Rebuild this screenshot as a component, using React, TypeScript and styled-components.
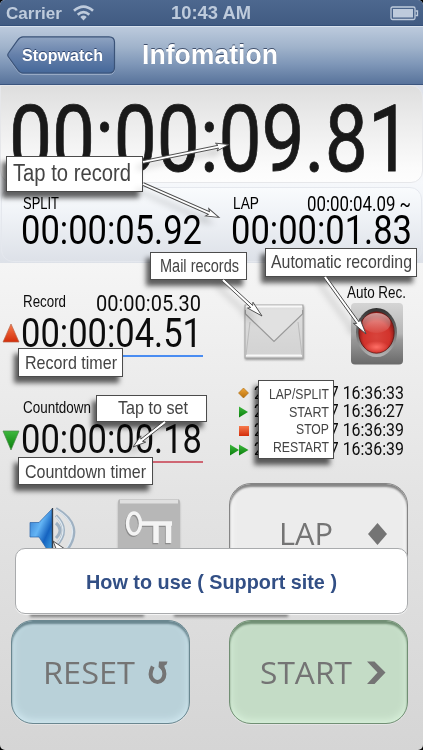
import React, { useLayoutEffect, useRef, useState } from "react";
import styled, { createGlobalStyle } from "styled-components";

const GlobalStyle = createGlobalStyle`
  * { box-sizing: border-box; }
  body { margin: 0; background: #000; font-family: "Liberation Sans", Arial, sans-serif; }
`;

/* ---------- text squeezed to a given width ---------- */

const FitBox = styled.div<{ $w: number; $size: number }>`
  width: ${(p) => p.$w}px;
  height: ${(p) => p.$size}px;
  font-size: ${(p) => p.$size}px;
  line-height: 1;
  flex: none;
`;
const FitInner = styled.span`
  display: inline-block;
  vertical-align: top;
  white-space: nowrap;
  transform-origin: 0 0;
`;

type FitProps = { w: number; size: number; children: string; className?: string };

function FitText({ w, size, children, className }: FitProps) {
  const ref = useRef<HTMLSpanElement>(null);
  const [k, setK] = useState(1);
  useLayoutEffect(() => {
    const natural = ref.current ? ref.current.getBoundingClientRect().width / k : 0;
    if (natural) setK(w / natural);
  }, [w, size, children]);
  return (
    <FitBox $w={w} $size={size} className={className}>
      <FitInner ref={ref} style={{ transform: `scaleX(${k})` }}>
        {children}
      </FitInner>
    </FitBox>
  );
}

const Digits = styled(FitText)`
  font-family: Roboto, "Liberation Sans", sans-serif;
`;
const MainDigits = styled(Digits)`
  -webkit-text-stroke: 0.8px #191919;
`;

/* ---------- frame ---------- */

const Screen = styled.main`
  position: relative;
  width: 423px;
  height: 750px;
  overflow: hidden;
  border-radius: 5px;
  display: flex;
  flex-direction: column;
  color: #0c0c0c;
  background: linear-gradient(#f5f5f5 263px, #efefef 340px, #e4e4e4 490px, #d5d5d5 750px);
`;

const StatusBar = styled.header`
  height: 26px;
  flex: none;
  display: grid;
  grid-template-columns: 67px 98px 1fr auto;
  align-items: start;
  padding: 5px 4px 0 6px;
  color: #becbdc;
  font-weight: bold;
  background: linear-gradient(#4d688f, #415b82);
  border-bottom: 1px solid #34507a;
`;
const WifiIcon = styled.svg`
  width: 21px;
  height: 16px;
`;
const BatteryIcon = styled.svg`
  width: 29px;
  height: 15px;
  margin-top: 1px;
`;

const NavBar = styled.nav`
  height: 59px;
  flex: none;
  display: flex;
  padding-left: 7px;
  background: linear-gradient(#bccadd, #a0b3cb 35%, #7f97b8 65%, #58739b);
  border-top: 1px solid #d8e2ee;
  border-bottom: 1px solid #3b557e;
`;
const BackButton = styled.button`
  position: relative;
  width: 109px;
  height: 40px;
  margin-top: 9px;
  padding: 0 0 1px 15px;
  border: 0;
  background: none;
  color: #fff;
  display: flex;
  align-items: center;
  font: bold 16px "Liberation Sans", Arial, sans-serif;
  text-shadow: 0 -1px 0 rgba(20, 40, 80, 0.7);
`;
const BackShape = styled.svg`
  position: absolute;
  inset: 0;
`;
const BackLabel = styled(FitText)`
  position: relative;
`;
const Title = styled(FitText)`
  margin: 15px 0 0 26px;
  color: #fff;
  font-weight: bold;
  text-shadow: 0 -1px 0 rgba(40, 55, 85, 0.8);
`;

/* ---------- timers ---------- */

const Display = styled.section`
  height: 98px;
  flex: none;
  padding: 7px 0 0 8px;
  color: #191919;
  border: 1px solid #e6e7ea;
  border-radius: 0 12px 12px 12px;
  background: linear-gradient(#dedede, #ebebeb 35%, #fbfbfb 85%, #fdfdfd);
`;
const DisplayBack = styled.div`
  height: 178px;
  flex: none;
  background: linear-gradient(#dde1ea, #f6f8fb 98px, #f2f5f9 115px, #dde1e8);
`;
const SplitPanel = styled.section`
  height: 75px;
  margin: 4px 1px 0;
  padding: 7px 0 0 19px;
  display: grid;
  grid-template-columns: 210px 182px;
  color: #000;
  border: 1px solid #e5e8ee;
  border-radius: 12px;
  background: linear-gradient(#f9fbfd, #f0f3f7 35%, #dde1e8);
`;
const Head = styled.div<{ $h: number }>`
  height: ${(p) => p.$h}px;
  display: flex;
  justify-content: space-between;
  padding: 0 2px;
`;
const SideTime = styled(Digits)`
  margin-top: -1px;
`;
const Row = styled.section`
  height: 106px;
  flex: none;
  display: grid;
  grid-template-columns: 21px 182px 1fr;
  padding-top: 29px;
`;
const Marker = styled.svg`
  width: 18px;
  height: 22px;
  margin: 31px 0 0 2px;
`;
const TimerBody = styled.div<{ $line: string }>`
  height: 65px;
  border-bottom: 2px solid ${(p) => p.$line};
`;
const TimerLabel = styled(FitText)`
  margin-top: 1px;
`;

const Devices = styled.div`
  display: flex;
  align-items: flex-start;
  padding-left: 38px;
`;
const MailIcon = styled.svg`
  width: 66px;
  height: 62px;
  margin-top: 10px;
`;
const AutoRec = styled.div`
  display: flex;
  flex-direction: column;
  margin: -7px 0 0 40px;
`;
const RecButton = styled.svg`
  width: 54px;
  height: 64px;
  margin: 1px 0 0 3px;
`;
const Log = styled.ul`
  list-style: none;
  margin: -14px 0 0;
  padding: 0;
`;
const LogLine = styled.li`
  height: 18.8px;
  display: grid;
  grid-template-columns: 51px 150px;
  align-items: center;
`;
const LogMark = styled.svg`
  width: 24px;
  height: 16px;
  margin-left: 24px;
`;

/* ---------- lower controls ---------- */

const Controls = styled.section`
  height: 137px;
  flex: none;
  display: flex;
  align-items: flex-start;
  padding: 8px 0 0 28px;
`;
const SpeakerIcon = styled.svg`
  width: 52px;
  height: 52px;
  margin-top: 22px;
`;
const KeyIcon = styled.svg`
  width: 68px;
  height: 60px;
  margin: 14px 0 0 35px;
`;
const Actions = styled.section`
  display: flex;
  gap: 39px;
  padding: 8px 0 0 11px;
`;
const PadButton = styled.button<{ $bg: string; $edge: string; $glow: string }>`
  width: 179px;
  height: 104px;
  flex: none;
  display: flex;
  align-items: flex-start;
  justify-content: space-between;
  padding: 36px 20px 0 29px;
  border: 1px solid ${(p) => p.$edge};
  border-radius: 22px;
  background: ${(p) => p.$bg};
  box-shadow: inset 0 3px 2px ${(p) => p.$edge}, inset 0 -2px 8px ${(p) => p.$glow},
    0 1px 0 rgba(255, 255, 255, 0.35);
  color: #747474;
  font-family: "Open Sans", "Noto Sans", sans-serif;
`;
const LapButton = styled(PadButton)`
  margin-left: 46px;
  height: 120px;
  padding: 34px 19px 0 49px;
`;
const PadIcon = styled.svg`
  width: 22px;
  height: 26px;
  margin-top: 3px;
`;

/* ---------- overlays ---------- */

const SupportButton = styled.button`
  position: absolute;
  left: 15px;
  top: 548px;
  width: 393px;
  height: 66px;
  padding: 2px 0 0 70px;
  display: flex;
  align-items: center;
  border: 1px solid #a9abad;
  border-radius: 10px;
  background: #fff;
  color: #324f85;
  font: bold 20px "Liberation Sans", Arial, sans-serif;
  box-shadow: 0 1px 0 rgba(255, 255, 255, 0.7);
`;
const LowerShadow = styled.i<{ $x: number }>`
  position: absolute;
  left: ${(p) => p.$x}px;
  top: 600px;
  width: 114px;
  height: 17px;
  background: rgba(0, 0, 0, 0.42);
  filter: blur(1.5px);
`;
const Callout = styled.aside<{ $x: number; $y: number; $w: number; $h: number; $px: number; $py: number }>`
  position: absolute;
  left: ${(p) => p.$x}px;
  top: ${(p) => p.$y}px;
  width: ${(p) => p.$w}px;
  height: ${(p) => p.$h}px;
  padding: ${(p) => p.$py}px ${(p) => p.$px}px 0;
  border: 1px solid #4c4c4c;
  background: #fff;
  color: #444;
  box-shadow: -4px 6px 5px rgba(0, 0, 0, 0.62);
`;
const Legend = styled(Callout)`
  display: flex;
  flex-direction: column;
  align-items: flex-end;
  gap: 2.6px;
`;
const Arrows = styled.svg`
  position: absolute;
  inset: 0;
  pointer-events: none;
  filter: drop-shadow(-6px 6px 3px rgba(0, 0, 0, 0.16));
`;

function Arrow({ from, to, size = 12 }: { from: number[]; to: number[]; size?: number }) {
  const dx = to[0] - from[0];
  const dy = to[1] - from[1];
  const len = Math.hypot(dx, dy);
  const angle = (Math.atan2(dy, dx) * 180) / Math.PI;
  const neck = len - size;
  return (
    <path
      transform={`translate(${from[0]} ${from[1]}) rotate(${angle})`}
      d={`M0 -1.4H${neck + 1}L${neck - 1} -4L${len} 0L${neck - 1} 4L${neck + 1} 1.4H0`}
      fill="#fff"
      stroke="#4a4a4a"
      strokeWidth="0.9"
    />
  );
}

type TimerProps = {
  label: string;
  labelW: number;
  value: string;
  line: string;
  side?: string;
  marker: React.ReactNode;
};

function Timer({ label, labelW, value, line, side, marker }: TimerProps) {
  return (
    <>
      <Marker viewBox="0 0 18 22">{marker}</Marker>
      <TimerBody $line={line}>
        <Head $h={21}>
          <TimerLabel w={labelW} size={16.5}>{label}</TimerLabel>
          {side && <Digits w={105} size={22.5}>{side}</Digits>}
        </Head>
        <Digits w={181} size={40.5}>{value}</Digits>
      </TimerBody>
    </>
  );
}

const marks = [
  <path key="d" d="M16.500 3L21.500 8L16.500 13L11.500 8Z" fill="url(#amber)" stroke="#a86a10" strokeWidth=".6" />,
  <path key="p" d="M12 2.500L21 8L12 13.500Z" fill="url(#green)" />,
  <rect key="s" x="12" y="3" width="10" height="10" fill="url(#red)" />,
  <path key="r" d="M3 2.500L12 8V2.500L21.500 8L12 13.500V8L3 13.500Z" fill="url(#green)" />,
];
const times = ["16:36:33", "16:36:27", "16:36:39", "16:36:39"];

export default function App() {
  return (
    <>
      <GlobalStyle />
      <Screen>
        <StatusBar>
          <FitText w={56} size={17}>Carrier</FitText>
          <WifiIcon viewBox="0 0 21 16">
            <g fill="none" stroke="#becbdc" strokeWidth="2.700">
              <path d="M1 5.800Q10.500 -2.500 20 5.800" />
              <path d="M4.700 9.700Q10.500 4.600 16.300 9.700" />
            </g>
            <path d="M7.300 12Q10.500 9.200 13.700 12L10.500 15.400Z" fill="#becbdc" />
          </WifiIcon>
          <FitText w={80} size={17.5}>10:43 AM</FitText>
          <BatteryIcon viewBox="0 0 29 15">
            <rect x="1" y="1" width="24" height="12.500" rx="1.500" fill="none" stroke="#becbdc" strokeWidth="1.300" />
            <rect x="3" y="3" width="20" height="8.500" fill="#becbdc" />
            <path d="M25.500 5H27.500V9.500H25.500" fill="none" stroke="#becbdc" strokeWidth="1.300" />
          </BatteryIcon>
        </StatusBar>
        <NavBar>
          <BackButton>
            <BackShape width="109" height="40" viewBox="0 0 109 40">
              <defs>
                <linearGradient id="back" x2="0" y2="1">
                  <stop offset="0" stopColor="#8fa4c2" />
                  <stop offset=".5" stopColor="#6580aa" />
                  <stop offset="1" stopColor="#45689a" />
                </linearGradient>
              </defs>
              <path d="M16 1.500H102Q107.500 1.500 107.500 7V33Q107.500 38.500 102 38.500H16Q13 38.500 10.500 35L1.500 22Q0 20 1.500 18L10.500 5Q13 1.500 16 1.500Z" fill="none" stroke="#b5c3d8" strokeOpacity=".6" />
              <path d="M16 .8H102Q107.500 .8 107.500 6.300V31.500Q107.500 37 102 37H16Q13 37 10.500 33.500L1.500 21Q0 19 1.500 17L10.500 4.300Q13 .8 16 .8Z" fill="url(#back)" stroke="#3b5378" strokeWidth="1.200" />
            </BackShape>
            <BackLabel w={81} size={16}>Stopwatch</BackLabel>
          </BackButton>
          <Title w={136} size={27}>Infomation</Title>
        </NavBar>

        <DisplayBack>
          <Display>
            <MainDigits w={402} size={93}>00:00:09.81</MainDigits>
          </Display>
          <SplitPanel>
            <div>
              <Head $h={15}><FitText w={36} size={17}>SPLIT</FitText></Head>
              <Digits w={181} size={40.5}>00:00:05.92</Digits>
            </div>
            <div>
              <Head $h={15}>
                <FitText w={26} size={17}>LAP</FitText>
                <SideTime w={104} size={20}>00:00:04.09 ~</SideTime>
              </Head>
              <Digits w={181} size={40.5}>00:00:01.83</Digits>
            </div>
          </SplitPanel>
        </DisplayBack>

        <Row>
          <Timer
            label="Record"
            labelW={43}
            side="00:00:05.30"
            value="00:00:04.51"
            line="#4a8df2"
            marker={<path d="M9 1L17 19H1Z" fill="url(#red)" stroke="#b8664a" strokeWidth=".7" />}
          />
          <Devices>
            <MailIcon viewBox="0 0 66 62">
              <defs>
                <linearGradient id="mail" x2="0" y2="1">
                  <stop offset="0" stopColor="#dedede" />
                  <stop offset="1" stopColor="#d2d2d2" />
                </linearGradient>
                <filter id="soft"><feGaussianBlur stdDeviation="1.200" /></filter>
              </defs>
              <rect x="4" y="4" width="59" height="54" fill="#999" filter="url(#soft)" />
              <rect x="4" y="3" width="58" height="53" fill="url(#mail)" stroke="#a5a5a5" />
              <path d="M5 4.500H61M5 53.500H61" stroke="#f8f8f8" strokeWidth="2" />
              <path d="M9 20L5 53M57 20L61 53" stroke="#bbb" fill="none" />
              <path d="M4.500 8V12L33 39.500L61.500 12V8" fill="#e0e0e0" stroke="#999" strokeWidth="1.200" />
              <path d="M5 7.500H61V11L33 37.500L5 11Z" fill="#e1e1e1" />
            </MailIcon>
            <AutoRec>
              <FitText w={59} size={16}>Auto Rec.</FitText>
              <RecButton viewBox="0 0 54 64">
                <defs>
                  <linearGradient id="steel" x2="0" y2="1">
                    <stop offset="0" stopColor="#d5d5d5" />
                    <stop offset=".5" stopColor="#b5b5b5" />
                    <stop offset=".6" stopColor="#999" />
                    <stop offset="1" stopColor="#696969" />
                  </linearGradient>
                  <linearGradient id="ring" x2="0" y2="1">
                    <stop offset="0" stopColor="#303030" />
                    <stop offset="1" stopColor="#b5b5b5" />
                  </linearGradient>
                  <radialGradient id="lamp" cy=".6">
                    <stop offset="0" stopColor="#d8443c" />
                    <stop offset=".75" stopColor="#d2332c" />
                    <stop offset="1" stopColor="#9a1f1b" />
                  </radialGradient>
                  <linearGradient id="gloss" x2="0" y2="1">
                    <stop offset="0" stopColor="#fff" stopOpacity=".55" />
                    <stop offset="1" stopColor="#fff" stopOpacity=".05" />
                  </linearGradient>
                  <radialGradient id="glow">
                    <stop offset="0" stopColor="#ff6f66" />
                    <stop offset="1" stopColor="#ff6f66" stopOpacity="0" />
                  </radialGradient>
                </defs>
                <rect x="1" y="1" width="52" height="61.500" rx="4" fill="url(#steel)" />
                <ellipse cx="26.500" cy="30.500" rx="20.500" ry="24.500" fill="url(#ring)" />
                <ellipse cx="26.500" cy="30.500" rx="17.700" ry="20.700" fill="url(#lamp)" stroke="#5b1512" strokeWidth=".8" />
                <ellipse cx="26.500" cy="45" rx="12" ry="6" fill="url(#glow)" />
                <ellipse cx="26.500" cy="21" rx="14" ry="10" fill="url(#gloss)" />
              </RecButton>
            </AutoRec>
          </Devices>
        </Row>

        <Row>
          <Timer
            label="Countdown"
            labelW={68}
            value="00:00:00.18"
            line="#cf6673"
            marker={<path d="M1 2H17L9 21Z" fill="url(#green)" stroke="#4b8a4b" strokeWidth=".7" />}
          />
          <Log>
            {times.map((t, i) => (
              <LogLine key={i}>
                <LogMark viewBox="0 0 24 16">
                  <defs>
                    <linearGradient id="amber" x2="0" y2="1">
                      <stop offset="0" stopColor="#f0a63a" />
                      <stop offset="1" stopColor="#b8700c" />
                    </linearGradient>
                    <linearGradient id="green" x2="0" y2="1">
                      <stop offset="0" stopColor="#3eb83e" />
                      <stop offset="1" stopColor="#087e0a" />
                    </linearGradient>
                    <linearGradient id="red" x2="0" y2="1">
                      <stop offset="0" stopColor="#f77a4c" />
                      <stop offset="1" stopColor="#d32d0a" />
                    </linearGradient>
                  </defs>
                  {marks[i]}
                </LogMark>
                <Digits w={150} size={17.5}>{`2012/12/07 ${t}`}</Digits>
              </LogLine>
            ))}
          </Log>
        </Row>

        <Controls>
          <SpeakerIcon viewBox="0 0 52 52">
            <defs>
              <linearGradient id="blue" x2="1" y2="1">
                <stop offset="0" stopColor="#2f74c9" />
                <stop offset=".4" stopColor="#64b5f5" />
                <stop offset=".65" stopColor="#1563c0" />
                <stop offset="1" stopColor="#4cb6f0" />
              </linearGradient>
            </defs>
            <path d="M2 17.500H11L24 4V52L11 32H2Z" fill="url(#blue)" stroke="#2863a8" strokeWidth=".7" />
            <path d="M24.500 3V50" stroke="#333e4c" strokeWidth="1.300" />
            <g fill="none" stroke="#9fb1c2" strokeWidth="3">
              <path d="M28 18Q36 25 28 33" />
              <path d="M28 10.500Q43 25 28 41" />
              <path d="M28 3.500Q57 20 39 45" />
            </g>
            <g fill="none" stroke="#dfe9f1" strokeWidth="1.200">
              <path d="M28 11.500Q42 25 28 40" />
              <path d="M28 4.500Q55 20 38 44" />
            </g>
          </SpeakerIcon>
          <KeyIcon viewBox="0 0 68 60">
            <rect x="3" y="4" width="62" height="60" rx="3" fill="#8d8d8d" opacity=".6" filter="url(#soft)" />
            <rect x="3" y="2" width="62" height="62" rx="3" fill="#b7b7b7" />
            <path d="M5 4.500H63" stroke="#e0e0e0" strokeWidth="4" />
            <g transform="translate(-.8 1.200)" fill="none" stroke="#8c8c8c">
              <ellipse cx="19" cy="26.500" rx="6.500" ry="10.500" strokeWidth="3.500" />
              <path d="M26 26.500H57" strokeWidth="4.500" />
              <path d="M41 27V46M53.500 27V46" strokeWidth="5.500" />
            </g>
            <g fill="none" stroke="#f4f4f4">
              <ellipse cx="19" cy="26.500" rx="6.500" ry="10.500" strokeWidth="3.500" />
              <path d="M26 26.500H57" strokeWidth="4.500" />
              <path d="M41 27V46M53.500 27V46" strokeWidth="5.500" />
            </g>
          </KeyIcon>
          <LapButton $bg="#ececec" $edge="#858585" $glow="#fff">
            <FitText w={54} size={31}>LAP</FitText>
            <PadIcon viewBox="0 0 22 26">
              <path d="M11.500 2L21 13L11.500 24L2 13Z" fill="#747474" />
            </PadIcon>
          </LapButton>
        </Controls>

        <Actions>
          <PadButton $bg="#b9d1d9" $edge="#6a8790" $glow="#d5ecf4">
            <FitText w={92} size={31}>RESET</FitText>
            <PadIcon viewBox="0 0 22 26">
              <path d="M5.800 6.500Q1.500 15 5.500 19.500Q10.500 24.500 15.500 19.500Q19.500 14 15 6.500" fill="none" stroke="#747474" strokeWidth="4" />
              <path d="M12 1.500H20.500L19.500 4.500L17.500 5.500L16.500 12L11.500 7Z" fill="#747474" />
            </PadIcon>
          </PadButton>
          <PadButton $bg="#c4dcc6" $edge="#718f74" $glow="#dcf4de">
            <FitText w={92} size={31}>START</FitText>
            <PadIcon viewBox="0 0 22 26">
              <path d="M2 1.500H9.500L20.500 12.500L9.500 24H2L12.500 12.500Z" fill="#747474" />
            </PadIcon>
          </PadButton>
        </Actions>

        <Callout $x={6} $y={156} $w={137} $h={36} $px={6} $py={5}>
          <FitText w={118} size={23.5}>Tap to record</FitText>
        </Callout>
        <Callout $x={150} $y={252} $w={97} $h={28} $px={9} $py={4}>
          <FitText w={79} size={18}>Mail records</FitText>
        </Callout>
        <Callout $x={265} $y={248} $w={152} $h={29} $px={5} $py={4}>
          <FitText w={141} size={18.5}>Automatic recording</FitText>
        </Callout>
        <Callout $x={18} $y={348} $w={105} $h={29} $px={6} $py={4}>
          <FitText w={92} size={19}>Record timer</FitText>
        </Callout>
        <Callout $x={18} $y={457} $w={135} $h={28} $px={6} $py={4}>
          <FitText w={121} size={19}>Countdown timer</FitText>
        </Callout>
        <Callout $x={96} $y={395} $w={111} $h={27} $px={21} $py={2}>
          <FitText w={70} size={19}>Tap to set</FitText>
        </Callout>
        <Legend $x={258} $y={380} $w={76} $h={79} $px={4} $py={5}>
          <FitText w={60} size={15}>LAP/SPLIT</FitText>
          <FitText w={40} size={15}>START</FitText>
          <FitText w={33} size={15}>STOP</FitText>
          <FitText w={56} size={15}>RESTART</FitText>
        </Legend>

        <Arrows width="423" height="750" viewBox="0 0 423 750">
          <Arrow from={[143, 162]} to={[229, 144.5]} />
          <Arrow from={[143, 184]} to={[219, 217.5]} />
          <Arrow from={[223, 280]} to={[262, 316]} size={15} />
          <Arrow from={[325, 277]} to={[366, 334]} size={15} />
          <Arrow from={[165, 422]} to={[133, 447]} />
          <Arrow from={[70, 562]} to={[53, 541]} />
        </Arrows>

        <LowerShadow $x={30} />
        <LowerShadow $x={174} />
        <SupportButton>
          <FitText w={251} size={20.5}>How to use ( Support site )</FitText>
        </SupportButton>
      </Screen>
    </>
  );
}
